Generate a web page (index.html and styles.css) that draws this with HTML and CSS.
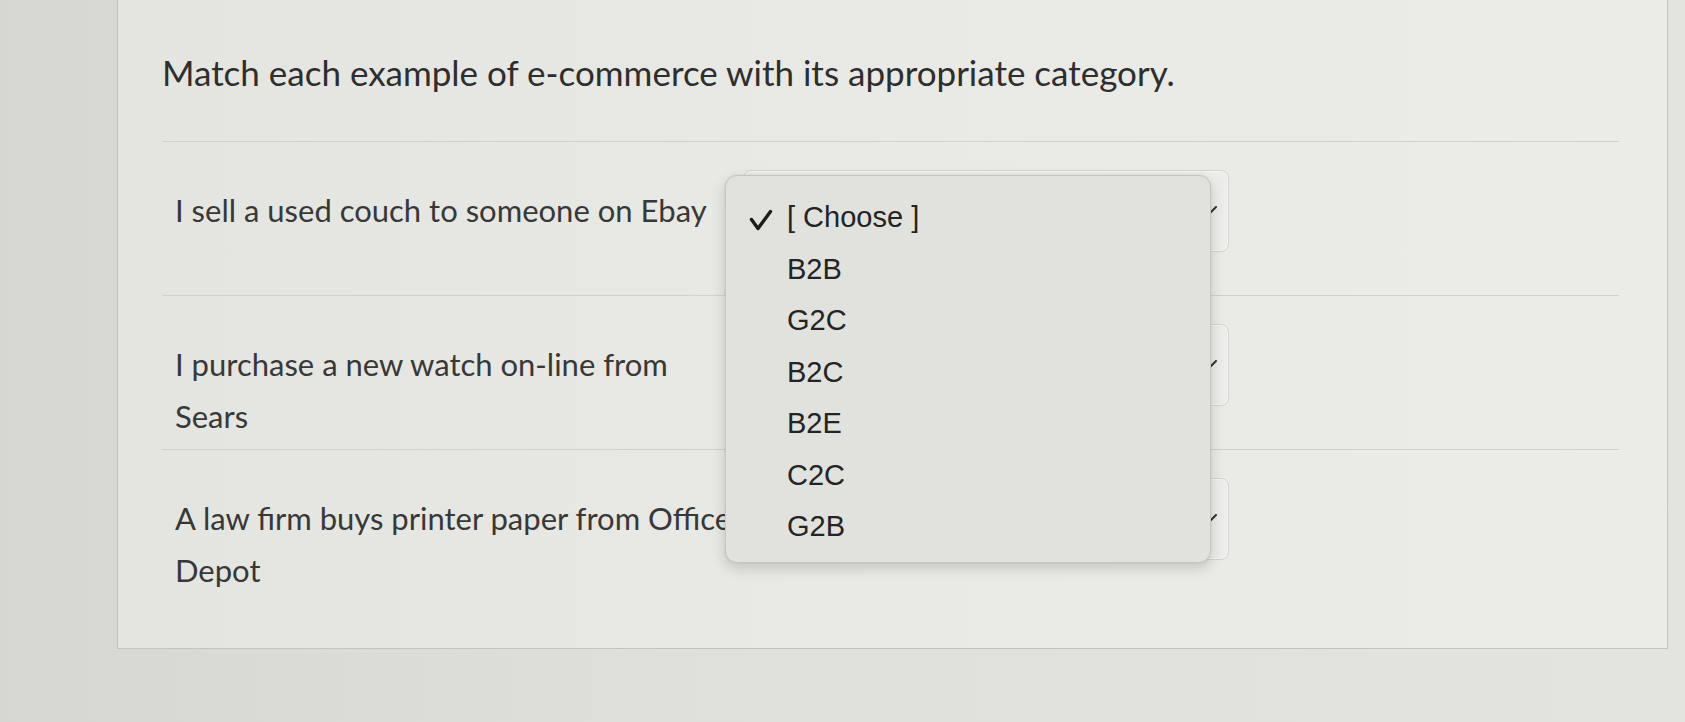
FILE: index.html
```html
<!DOCTYPE html>
<html lang="en">
<head>
<meta charset="utf-8">
<title>Matching question</title>
<link rel="stylesheet" href="styles.css">
</head>
<body>
<div class="screen">
  <div class="card">
    <h1 class="question">Match each example of e-commerce with its appropriate category.</h1>
    <div class="rows">
      <div class="row">
        <div class="label">I sell a used couch to someone on Ebay</div>
        <div class="select">
          <svg class="chev" viewBox="0 0 16 10" width="16" height="10"><path d="M1 1 L8 8 L15 1" fill="none" stroke="#333" stroke-width="2" stroke-linecap="round" stroke-linejoin="round"/></svg>
        </div>
      </div>
      <div class="row">
        <div class="label">I purchase a new watch on-line from Sears</div>
        <div class="select">
          <svg class="chev" viewBox="0 0 16 10" width="16" height="10"><path d="M1 1 L8 8 L15 1" fill="none" stroke="#333" stroke-width="2" stroke-linecap="round" stroke-linejoin="round"/></svg>
        </div>
      </div>
      <div class="row">
        <div class="label">A law firm buys printer paper from Office Depot</div>
        <div class="select">
          <svg class="chev" viewBox="0 0 16 10" width="16" height="10"><path d="M1 1 L8 8 L15 1" fill="none" stroke="#333" stroke-width="2" stroke-linecap="round" stroke-linejoin="round"/></svg>
        </div>
      </div>
    </div>
  </div>
  <ul class="popup">
    <li class="opt checked"><svg class="check" viewBox="0 0 24 22" width="24" height="22"><path d="M2.5 10.5 L9 19.5 L21.5 2.5" fill="none" stroke="#1c1c1c" stroke-width="3.4" stroke-linecap="round" stroke-linejoin="round"/></svg>[ Choose ]</li>
    <li class="opt">B2B</li>
    <li class="opt">G2C</li>
    <li class="opt">B2C</li>
    <li class="opt">B2E</li>
    <li class="opt">C2C</li>
    <li class="opt">G2B</li>
  </ul>
</div>
</body>
</html>
```

FILE: styles.css
```css
html, body {
  margin: 0;
  padding: 0;
}
body {
  background: #dcdcd8;
}
.screen {
  position: relative;
  width: 1685px;
  height: 722px;
  overflow: hidden;
  background: linear-gradient(90deg, #d6d6d2 0%, #dfdfdb 40%, #e3e3df 100%);
}
.card {
  margin-left: 117px;
  width: 1551px;
  box-sizing: border-box;
  padding: 52px 48px 45px 44px;
  background: linear-gradient(90deg, #e4e4e0 0%, #e9e9e5 50%, #ebebe7 100%);
  border: 1px solid #c3c3bf;
  border-top: none;
  font-family: Lato, "Open Sans", sans-serif;
  color: #383838;
}
.question {
  margin: 0 0 49px;
  font-size: 35px;
  line-height: 40px;
  font-weight: 400;
  color: #2e2e2e;
  white-space: nowrap;
}
.rows {
  display: flex;
  flex-direction: column;
}
.row {
  display: flex;
  align-items: flex-start;
  height: 154px;
  box-sizing: border-box;
  padding: 28px 0 0 13px;
  border-top: 1px solid #d0d0cc;
}
.label {
  flex: 0 0 568px;
  margin-top: 14px;
  font-size: 31px;
  line-height: 52px;
}
.select {
  flex: 0 0 486px;
  height: 82px;
  box-sizing: border-box;
  border: 1px solid #d2d2ce;
  border-radius: 8px;
  background: #ececea;
  box-shadow: inset 0 0 0 1px rgba(255,255,255,0.5);
  display: flex;
  align-items: center;
  justify-content: flex-end;
  padding-right: 11px;
}
.chev {
  display: block;
}
.popup {
  position: absolute;
  left: 725px;
  top: 175px;
  width: 486px;
  height: 388px;
  box-sizing: border-box;
  margin: 0;
  padding: 16px 0 0 0;
  list-style: none;
  background: #e1e1dd;
  border: 1px solid #c6c6c2;
  border-radius: 12px;
  box-shadow: 0 5px 14px rgba(0,0,0,0.16), 0 0 2px rgba(0,0,0,0.1);
  font-family: "Liberation Sans", Arial, sans-serif;
  font-size: 29px;
  color: #242424;
}
.opt {
  position: relative;
  height: 51.5px;
  line-height: 51.5px;
  padding-left: 61px;
  white-space: nowrap;
}
.check {
  position: absolute;
  left: 23px;
  top: 17px;
}
```
